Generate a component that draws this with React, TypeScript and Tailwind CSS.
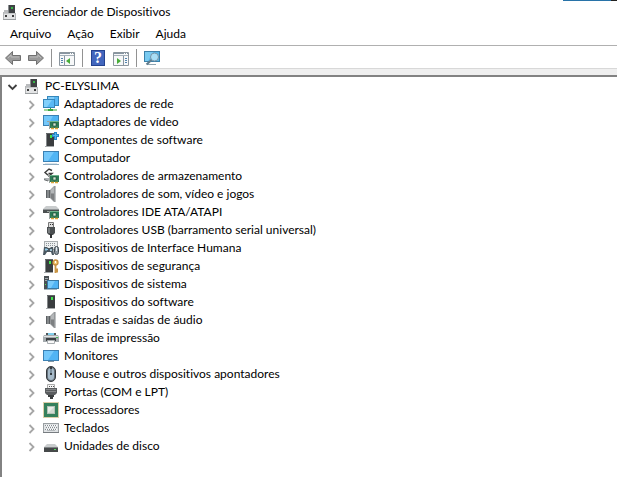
import React, { useState } from 'react';

type IconProps = { children: React.ReactNode };

function Icon({ children }: IconProps) {
  return (
    <svg viewBox="0 0 16 16" className="size-4 shrink-0" fill="none" aria-hidden="true">
      {children}
    </svg>
  );
}

function Board() {
  return (
    <g>
      <path d="M7 7h9v7H7z" fill="#2b7a55" />
      <path d="M4 7.500h2.500v7.500" stroke="#9aa5a0" />
      <path d="M7 7.500h9" stroke="#6fb48c" />
      <path d="M8 12.500h7" stroke="#3f8561" />
      <rect x="10" y="9" width="3" height="3" fill="#d4e6d4" stroke="#174a31" strokeWidth=".6" />
      <path d="M8 14.500h3M12 14.500h3" stroke="#dda63a" strokeWidth="1.500" />
    </g>
  );
}

function Tower({ x = 4 }: { x?: number }) {
  return (
    <g transform={`translate(${x} 0)`}>
      <path d="M0 1h8v13H0z" fill="#3a3d3f" />
      <path d="M0 1h1v13H0z" fill="#84888a" />
      <path d="M0 1.500h8" stroke="#606466" />
      <rect x="4" y="3" width="2" height="3" fill="#3fe04d" />
      <path d="M-1 14.500h9" stroke="#a4a8aa" />
    </g>
  );
}

const ComputerRoot = () => (
  <Icon>
    <path d="M6 1h7v8H6z" fill="#3f4244" />
    <path d="M6 1h1v8H6z" fill="#8b8f91" />
    <rect x="9" y="3" width="2" height="2" fill="#38b548" />
    <path d="M2 6h4v3H2z" fill="#babcbe" />
    <path d="M1 9h13v6H1z" fill="#e3e4e5" />
    <path d="M1.500 8v7M13.500 9v6" stroke="#b4b6b8" />
    <path d="M2 9.500h11" stroke="#c6c8c9" />
    <path d="M1 15.500h13" stroke="#9b9fa1" />
    <path d="M3 11h2v2H3zM10 11h2v2h-2z" fill="#3c3c3c" />
  </Icon>
);

const Network = () => (
  <Icon>
    <rect x="4.500" y=".5" width="11" height="9" fill="#58b7f2" stroke="#3587bb" />
    <path d="M5 1h6v3H5z" fill="#83cdf8" />
    <rect x=".5" y="3.500" width="11" height="8" fill="#58b9f5" stroke="#3686ba" />
    <path d="M1 4h8l-5 7H1z" fill="#82d0fb" />
    <path d="M1 14h13" stroke="#9ed49a" strokeWidth="2" />
    <path d="M5 13h5v2H5z" fill="#36a342" />
    <path d="M7 12h1v1H7z" fill="#36a342" />
  </Icon>
);

const Display = () => (
  <Icon>
    <rect x=".5" y="1.500" width="15" height="10" fill="#50b4f4" stroke="#3b80b3" />
    <path d="M1 2h9l-5 9H1z" fill="#74c8fb" />
    <Board />
  </Icon>
);

const Component = () => (
  <Icon>
    <Tower x={3} />
    <path d="M12.500 0v8M9 3.500h7" stroke="#2587c9" strokeWidth="3" />
    <path d="M12.500 1v6M10 3.500h5" stroke="#55b5ed" />
  </Icon>
);

const Computer = () => (
  <Icon>
    <rect x=".5" y="1.500" width="15" height="10" fill="#50b4f4" stroke="#3b80b3" />
    <path d="M1 2h10l-6 9H1z" fill="#74c8fb" />
    <path d="M2 13.500h12" stroke="#d6e3eb" />
    <path d="M0 14.500h16" stroke="#8eabc0" />
  </Icon>
);

const Storage = () => (
  <Icon>
    <path d="M9 2.500 6 1 2 4.500l4 3.500L9 5.500H5.500" stroke="#3b3b3b" strokeWidth="1.400" />
    <path d="M1 10h5v3H4l-3-1z" fill="#aeb2b4" />
    <path d="m1 11.500 4 1.500" stroke="#6b6f71" />
    <Board />
  </Icon>
);

const Speaker = () => (
  <Icon>
    <path d="M3 4h4v8H3z" fill="#85898b" />
    <path d="M7 4 11 0h1.500v16H11l-4-4z" fill="#96999b" />
    <path d="m8 4 3-3v6H8z" fill="#b4b7b9" />
    <path d="M8 8h3v7l-3-3z" fill="#7d8082" />
    <path d="M3.500 4v8M6.500 4v8" stroke="#5c6063" />
    <path d="M12.500 0v16" stroke="#bfc2c4" />
  </Icon>
);

const Ide = () => (
  <Icon>
    <path d="M3 2h10l3 3v1H0V5z" fill="#c9cccd" />
    <path d="M0 5h16v4H0z" fill="#4c5051" />
    <path d="M0 5.500h16" stroke="#929698" />
    <Board />
  </Icon>
);

const Usb = () => (
  <Icon>
    <path d="M5.500.5h5v5h-5z" fill="#ddd" stroke="#777" />
    <path d="M7 2.500h1M9 2.500h1" stroke="#333" />
    <path d="M4 5h8v6l-2 2H6l-2-2z" fill="#4b4f51" />
    <path d="M5 6h2v5H5z" fill="#797d7f" />
    <path d="M8 12v4" stroke="#303334" strokeWidth="2" />
  </Icon>
);

const Hid = () => (
  <Icon>
    <rect x="1.500" y="1.500" width="13" height="8" fill="#edf0f1" stroke="#a8adb0" />
    <path d="M3 3.500h10M3 5.500h10" stroke="#8f9599" strokeDasharray="1 1" />
    <path d="M1 7h3l1 1h2l1-1h2l1 8H9l-1-3H4l-2 3H0z" fill="#4b5861" />
    <path d="M3 8v3M2 9.500h3" stroke="#91c9e6" />
    <circle cx="8" cy="10" r="1" fill="#bce3f5" />
    <rect x="11.500" y="6.500" width="4" height="8" rx="2" fill="#8b969e" stroke="#434d54" />
    <path d="M13.500 7v4" stroke="#e4ebef" />
  </Icon>
);

const Security = () => (
  <Icon>
    <Tower x={2} />
    <path d="M12.500 6v9M13 11.500h2M13 13.500h2" stroke="#c99545" strokeWidth="1.800" />
    <circle cx="12.500" cy="4.500" r="2.500" fill="#f1c975" stroke="#c78f40" strokeWidth="1.300" />
    <path d="M12.500 3v2" stroke="#fff" />
  </Icon>
);

const SystemDevices = () => (
  <Icon>
    <path d="M1 0h5v13H1z" fill="#4a5054" />
    <path d="M2 2.500h3M2 4.500h3" stroke="#a2a9ad" />
    <rect x="2" y="8" width="1" height="1" fill="#4ce55a" />
    <rect x="4.500" y="4.500" width="11" height="8" fill="#50b4f4" stroke="#3978a2" />
    <path d="M5 5h7l-4 7H5z" fill="#78cafa" />
    <path d="M1 13.500h13" stroke="#a2b5c0" />
  </Icon>
);

const Software = () => (
  <Icon>
    <Tower x={4} />
  </Icon>
);

const Printer = () => (
  <Icon>
    <path d="M3 3h10v4H3z" fill="#505558" />
    <path d="M5 3h6v3H5z" fill="#83cfed" />
    <path d="M1 5h14l1 2v5H0V7z" fill="#a5abae" />
    <path d="M1 6.500h14" stroke="#e1e4e5" />
    <path d="M3 8h10v3H3z" fill="#3b4043" />
    <path d="M4.500 10.500h7v3h-7z" fill="#f8f8f8" stroke="#a9aeb1" />
    <path d="M13 7.500h2" stroke="#42b752" />
  </Icon>
);

const Monitor = () => (
  <Icon>
    <rect x=".5" y="2.500" width="15" height="10" fill="#50b4f4" stroke="#3b80b3" />
    <path d="M1 3h10L5 12H1z" fill="#74c8fb" />
    <path d="M5 13.500h6" stroke="#8197a5" />
  </Icon>
);

const Mouse = () => (
  <Icon>
    <rect x="3.500" y=".5" width="9" height="15" rx="4.500" fill="#66717a" stroke="#34393d" />
    <rect x="5" y="2" width="6" height="12" rx="3" fill="#a6bac9" />
    <path d="M8 1v8" stroke="#343c42" strokeWidth="2" />
    <path d="M8 3v4" stroke="#c3e4fa" />
  </Icon>
);

const Port = () => (
  <Icon>
    <path d="M4.500.5h7v4h-7z" fill="#f4f4f4" stroke="#aaa" />
    <path d="M6 2.500h1M8 2.500h1M10 2.500h1" stroke="#555" />
    <path d="M2 4h12v5l-2 2H4L2 9z" fill="#5a5d5f" />
    <path d="M3 5.500h10M3 7.500h10" stroke="#858789" />
    <path d="M5 11h6v2H5zM7 13h3v2H7z" fill="#3b3e3f" />
  </Icon>
);

const Processor = () => (
  <Icon>
    <rect x=".5" y=".5" width="15" height="15" stroke="#b89c54" strokeDasharray="1 1" />
    <rect x="1" y="1" width="14" height="14" fill="#35805c" />
    <rect x="4.500" y="4.500" width="7" height="7" fill="#e9eee9" stroke="#b4c2b7" />
    <path d="M5 11 11 5v6z" fill="#d2dbd3" />
  </Icon>
);

const Keyboard = () => (
  <Icon>
    <rect x=".5" y="3.500" width="15" height="9" fill="#dfe2e4" stroke="#9a9fa2" />
    <path d="M2 5.500h12M3 7.500h11M2 9.500h12" stroke="#ffffff" />
    <path d="M2 5.500h12M3 7.500h11M2 9.500h12" stroke="#858b90" strokeDasharray="1 1" />
    <path d="M4 10.500h8" stroke="#b5babd" />
    <path d="M0 12.500h16" stroke="#777c80" />
  </Icon>
);

const Disk = () => (
  <Icon>
    <path d="M4 6h8l3 3v1H1V9z" fill="#c9cccd" />
    <path d="M1 9h14v5H1z" fill="#46494a" />
    <path d="M1 9.500h14" stroke="#808486" />
    <rect x="11" y="11" width="2" height="1" fill="#58db60" />
  </Icon>
);

const devices = [
  { name: 'Adaptadores de rede', icon: Network },
  { name: 'Adaptadores de vídeo', icon: Display },
  { name: 'Componentes de software', icon: Component },
  { name: 'Computador', icon: Computer },
  { name: 'Controladores de armazenamento', icon: Storage },
  { name: 'Controladores de som, vídeo e jogos', icon: Speaker },
  { name: 'Controladores IDE ATA/ATAPI', icon: Ide },
  { name: 'Controladores USB (barramento serial universal)', icon: Usb },
  { name: 'Dispositivos de Interface Humana', icon: Hid },
  { name: 'Dispositivos de segurança', icon: Security },
  { name: 'Dispositivos de sistema', icon: SystemDevices },
  { name: 'Dispositivos do software', icon: Software },
  { name: 'Entradas e saídas de áudio', icon: Speaker },
  { name: 'Filas de impressão', icon: Printer },
  { name: 'Monitores', icon: Monitor },
  { name: 'Mouse e outros dispositivos apontadores', icon: Mouse },
  { name: 'Portas (COM e LPT)', icon: Port },
  { name: 'Processadores', icon: Processor },
  { name: 'Teclados', icon: Keyboard },
  { name: 'Unidades de disco', icon: Disk },
];

function Arrow({ right = false }: { right?: boolean }) {
  return (
    <Icon>
      <path
        d={right ? 'M.5 5.500h8v-4l7 6.500-7 6.500v-4h-8z' : 'M15.500 5.500h-8v-4L.5 8l7 6.500v-4h8z'}
        fill="#9b9b9b"
        stroke="#707070"
      />
      <path d={right ? 'M2 7h8V5l3 3' : 'M14 7H6V5L3 8'} stroke="#bababa" />
    </Icon>
  );
}

function Panel({ right = false }: { right?: boolean }) {
  return (
    <Icon>
      <path d="M.5 2.500h15v13H.5z" fill="#f7f8f9" stroke="#8c969e" />
      <path d="M1 3.500h14" stroke="#8795a1" />
      <path d="M1 5.500h14" stroke="#a5b0b9" />
      <path d="M11 3.500h1M13 3.500h1" stroke="#fff" />
      <path d={right ? 'M10.500 6v9' : 'M5.500 6v9'} stroke="#8795a1" />
      <path d={right ? 'M12 8.500h2M12 10.500h2M12 12.500h2' : 'M2 8.500h2M2 10.500h2M2 12.500h2'} stroke="#5384ad" />
      <path d={right ? 'm4 8 4 3-4 3z' : 'm11 8-4 3 4 3z'} fill="#48ad38" />
    </Icon>
  );
}

function Help() {
  return (
    <span className="flex w-4 justify-center">
      <span className="flex h-4 w-3.5 items-center justify-center border border-[#24428f] bg-[#4266bd] font-['Liberation_Serif',serif] text-base leading-4 font-bold text-white">
        ?
      </span>
    </span>
  );
}

const Scan = () => (
  <Icon>
    <rect x=".5" y="1.500" width="15" height="10" fill="#55b6e9" stroke="#3b80a9" />
    <path d="M1 2h8l-5 9H1z" fill="#79caf0" />
    <path d="M3 14.500h9" stroke="#8fa4b1" />
    <circle cx="10.500" cy="7" r="4" fill="#a9def5" stroke="#7b95a6" />
    <path d="m7.500 10-5 4.500" stroke="#607b8c" strokeWidth="2" />
  </Icon>
);

const Separator = () => <span className="h-[18px] w-px bg-[#929292]" />;

function Chevron({ open = false }: { open?: boolean }) {
  return (
    <svg viewBox="0 0 12 12" className="size-3" fill="none" aria-hidden="true">
      <path
        d={open ? 'M1.500 5l4 4 4-4' : 'M3.500 3l4 4-4 4'}
        stroke={open ? '#3f3f3f' : '#a6a6a6'}
        strokeWidth="1.800"
      />
    </svg>
  );
}

export default function App() {
  const [open, setOpen] = useState(true);

  return (
    <div className="flex min-h-screen flex-col bg-white font-[Lato,sans-serif] text-xs text-black [font-variant-ligatures:none]">
      <header className="border-b border-[#b0b0b0]">
        <div className="flex justify-end">
          <span className="h-px w-12 bg-[#2873a8]" />
          <span className="h-px w-1.5 bg-[#222]" />
        </div>
        <div className="flex h-[22px] items-center gap-[5px] pl-0.5">
          <ComputerRoot />
          <h1>Gerenciador de Dispositivos</h1>
        </div>
        <nav className="flex h-[22px] items-center gap-4 pl-2.5">
          <button>Arquivo</button>
          <button>Ação</button>
          <button>Exibir</button>
          <button>Ajuda</button>
        </nav>
      </header>

      <div role="toolbar" aria-label="Ferramentas" className="flex h-[22px] items-center pt-0.5 pl-[5px]">
        <div className="flex items-center gap-[7px]">
          <button aria-label="Voltar"><Arrow /></button>
          <button aria-label="Avançar"><Arrow right /></button>
          <Separator />
          <button aria-label="Mostrar árvore"><Panel /></button>
          <Separator />
          <button aria-label="Ajuda"><Help /></button>
          <button aria-label="Mostrar ações"><Panel right /></button>
          <Separator />
          <button aria-label="Verificar alterações de hardware"><Scan /></button>
        </div>
      </div>

      <div className="h-[7px] border-t border-[#d8d8d8] bg-[#efefef]" />

      <main className="flex-1 border-t-2 border-l-2 border-[#828282]">
        <div className="flex h-[18px] items-center pl-[5px]">
          <button aria-label="PC-ELYSLIMA" aria-expanded={open} onClick={() => setOpen(!open)}>
            <Chevron open={open} />
          </button>
          <span className="ml-[5px] flex items-center gap-[5px]">
            <ComputerRoot />
            PC-ELYSLIMA
          </span>
        </div>
        {open && (
          <ul>
            {devices.map(({ name, icon: DeviceIcon }) => (
              <li key={name} className="flex h-[18px] items-center pl-6">
                <button aria-label={name} aria-expanded={false}>
                  <Chevron />
                </button>
                <span className="ml-[5px] flex items-center gap-[5px] whitespace-nowrap">
                  <DeviceIcon />
                  {name}
                </span>
              </li>
            ))}
          </ul>
        )}
      </main>
    </div>
  );
}
